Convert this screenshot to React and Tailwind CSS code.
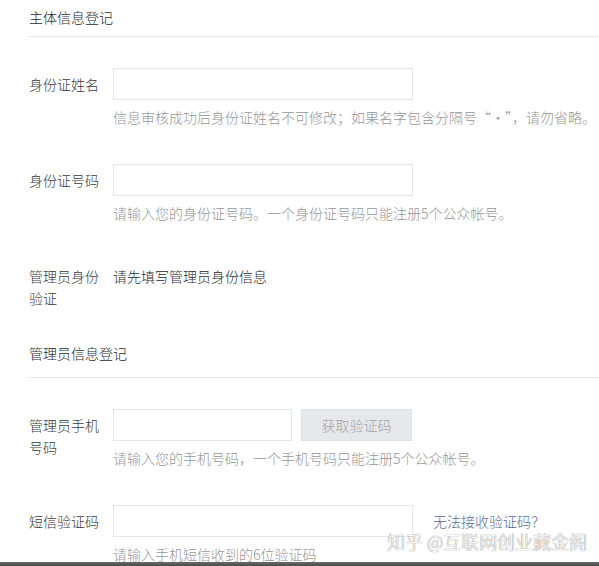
import React from "react";

const font = { fontFamily: '"Noto Sans CJK SC", "Noto Sans", sans-serif' };

function Row({ label, children, help }) {
  return (
    <div className="flex items-start">
      <div className="w-[72px] mr-[12px] pt-[5px] leading-[22px] text-[14px] text-[#3a3a3a]">{label}</div>
      <div className="flex flex-col">
        <div className="flex items-start">{children}</div>
        {help && (
          <div className="mt-[7px] leading-[20px] text-[14px] text-[#969696] whitespace-nowrap">{help}</div>
        )}
      </div>
    </div>
  );
}

export default function App() {
  return (
    <div className="relative w-[599px] h-[566px] overflow-hidden bg-white flex flex-col font-light" style={font}>
      <div className="pl-[29px] flex flex-col flex-1">
        <div className="pt-[7px] pb-[9px] leading-[20px] text-[14px] text-[#2a2a2a] border-b border-[#e7e7eb]">主体信息登记</div>

        <div className="mt-[31px]">
          <Row label="身份证姓名" help="信息审核成功后身份证姓名不可修改；如果名字包含分隔号“·”，请勿省略。">
            <div className="w-[300px] h-[32px] border border-[#e4e8eb] bg-white" />
          </Row>
        </div>

        <div className="mt-[37px]">
          <Row label="身份证号码" help="请输入您的身份证号码。一个身份证号码只能注册5个公众帐号。">
            <div className="w-[300px] h-[32px] border border-[#e4e8eb] bg-white" />
          </Row>
        </div>

        <div className="mt-[42px] flex items-start">
          <div className="w-[72px] mr-[12px] leading-[22px] text-[14px] text-[#3a3a3a]">管理员身份验证</div>
          <div className="leading-[22px] text-[14px] text-[#2a2a2a]">请先填写管理员身份信息</div>
        </div>

        <div className="mt-[34px] pb-[14px] leading-[20px] text-[14px] text-[#2a2a2a] border-b border-[#e7e7eb]">管理员信息登记</div>

        <div className="mt-[31px]">
          <Row label="管理员手机号码" help="请输入您的手机号码，一个手机号码只能注册5个公众帐号。">
            <div className="w-[179px] h-[32px] border border-[#e4e8eb] bg-white" />
            <div className="ml-[9px] w-[111px] h-[32px] border border-[#e0e1e5] bg-[#e7e8eb] flex items-center justify-center text-[14px] text-[#a3a3a3]">获取验证码</div>
          </Row>
        </div>

        <div className="mt-[37px]">
          <Row label="短信验证码" help="请输入手机短信收到的6位验证码">
            <div className="w-[300px] h-[32px] border border-[#e4e8eb] bg-white" />
            <div className="ml-[20px] pt-[5px] leading-[22px] text-[14px] text-[#576b95] whitespace-nowrap">无法接收验证码？</div>
          </Row>
        </div>
      </div>

      <div className="absolute left-0 right-0 bottom-0 h-[4px] bg-gradient-to-b from-[#6a6a6a] to-[#4a4a4a]" />

      <div className="absolute left-[387px] top-[530px] leading-[22px] text-[18px] font-extralight text-white whitespace-nowrap [text-shadow:0_0_1px_#8a8a8a,0_0_1px_#8a8a8a]">
        知乎 @互联网创业藏金阁
      </div>
    </div>
  );
}
